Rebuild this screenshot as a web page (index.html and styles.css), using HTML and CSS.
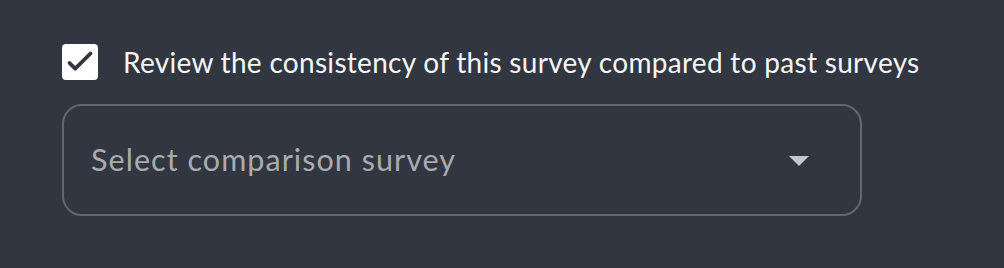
FILE: index.html
```html
<!DOCTYPE html>
<html lang="en">
<head>
<meta charset="utf-8">
<title>Survey consistency</title>
<link rel="stylesheet" href="styles.css">
</head>
<body>
<div class="panel">
  <label class="check-row">
    <span class="checkbox">
      <svg viewBox="0 0 36 36" width="36" height="36" aria-hidden="true">
        <path d="M7.5 19 L13.2 24.7 L28.5 9.5" fill="none" stroke="#313640" stroke-width="3.8" stroke-linecap="round" stroke-linejoin="round"/>
      </svg>
    </span>
    <span class="check-label">Review the consistency of this survey compared to past surveys</span>
  </label>
  <div class="select">
    <span class="placeholder">Select comparison survey</span>
    <span class="caret"></span>
  </div>
</div>
</body>
</html>
```
FILE: styles.css
```css
html, body {
  margin: 0;
  padding: 0;
  background: #313640;
}
body {
  width: 1004px;
  height: 268px;
  overflow: hidden;
  font-family: "Lato", "Noto Sans", sans-serif;
}
.panel {
  padding: 44px 0 0 62px;
  display: flex;
  flex-direction: column;
  gap: 24px;
}
.check-row {
  display: flex;
  align-items: center;
  gap: 25px;
}
.checkbox {
  width: 36px;
  height: 36px;
  background: #ffffff;
  border-radius: 4px;
  display: flex;
  flex: none;
}
.check-label {
  color: #f4f5f6;
  font-size: 28px;
  letter-spacing: 0.3px;
  line-height: 36px;
}
.select {
  box-sizing: border-box;
  width: 800px;
  height: 112px;
  border: 2px solid #62666f;
  border-radius: 20px;
  display: flex;
  align-items: center;
  justify-content: space-between;
  padding: 0 51px 2px 27px;
}
.placeholder {
  color: #a8abb1;
  font-size: 30.5px;
  letter-spacing: 1.05px;
}
.caret {
  width: 0;
  height: 0;
  border-left: 10px solid transparent;
  border-right: 10px solid transparent;
  border-top: 10px solid #c5c7cb;
  margin-top: 4px;
}
```
